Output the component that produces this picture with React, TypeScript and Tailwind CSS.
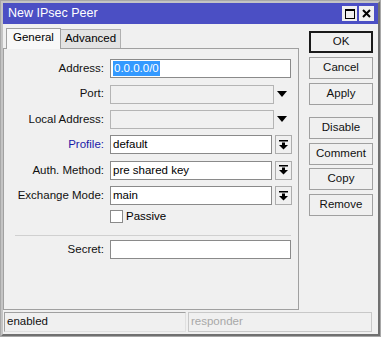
import React from "react";

const font = { fontFamily: '"Liberation Sans", Arial, sans-serif' };

function Arrow() {
  return (
    <div className="w-[16px] h-[20px] flex items-center justify-center">
      <svg width="10" height="6" viewBox="0 0 10 6">
        <polygon points="0,0 10,0 5,6" fill="#000" />
      </svg>
    </div>
  );
}

function MenuBtn() {
  return (
    <div className="w-[17px] h-[19px] border border-[#adadad] bg-[#f0f0f0] flex items-center justify-center">
      <svg width="9" height="10" viewBox="0 0 9 10">
        <rect x="0" y="0" width="9" height="1.5" fill="#000" />
        <rect x="3" y="2.5" width="3" height="3" fill="#000" />
        <polygon points="0,5 9,5 4.5,9.5" fill="#000" />
      </svg>
    </div>
  );
}

function Row({ label, blue, children }: { label: string; blue?: boolean; children: React.ReactNode }) {
  return (
    <div className="flex items-center h-[25.4px]">
      <div className={`w-[103px] text-right pr-[3px] ${blue ? "text-[#1a1aa8]" : "text-[#111]"}`}>{label}</div>
      <div className="flex items-center ml-[3px]">{children}</div>
    </div>
  );
}

function Btn({ label, def }: { label: string; def?: boolean }) {
  return (
    <div
      className={`w-[64px] h-[22px] flex items-center justify-center bg-[#f0f0f0] text-[#111] ${
        def ? "border-2 border-[#1a1a1a]" : "border border-[#a0a0a0]"
      }`}
    >
      {label}
    </div>
  );
}

export default function App() {
  return (
    <div
      style={font}
      className="w-[381px] h-[337px] bg-[#a8a8a8] p-[1px] text-[11.5px] leading-none select-none"
    >
      <div className="w-full h-full border-2 border-[#c4c4c4] border-r-[#707070] border-b-[#707070] bg-[#f0f0f0] flex flex-col">
        <div className="h-[21px] bg-[#4b4fc4] flex items-center pl-[5px] pr-[4px] shrink-0">
          <span className="text-white text-[12.5px]">New IPsec Peer</span>
          <div className="ml-auto flex gap-[2px]">
            <div className="w-[15px] h-[15px] bg-[#f0f0f0] flex items-center justify-center">
              <div className="w-[10px] h-[10px] border border-black border-t-2" />
            </div>
            <div className="w-[15px] h-[15px] bg-[#f0f0f0] flex items-center justify-center">
              <svg width="9" height="9" viewBox="0 0 9 9">
                <path d="M1 1 L8 8 M8 1 L1 8" stroke="#000" strokeWidth="2" />
              </svg>
            </div>
          </div>
        </div>
        <div className="flex flex-1 pt-[3px]">
          <div className="flex flex-col w-[296px]">
            <div className="flex items-end h-[21px] pl-[3px]">
              <div className="h-[21px] px-[6px] flex items-center bg-[#f8f8f8] border border-[#a0a0a0] border-b-0 relative z-10 mb-[-1px] pb-[2px]">
                General
              </div>
              <div className="h-[19px] px-[4px] flex items-center bg-[#e3e3e3] border border-[#b0b0b0] border-b-0 border-l-0">
                Advanced
              </div>
            </div>
            <div className="h-[262px] border border-[#a0a0a0] bg-[#f0f0f0] pt-[7px]">
              <Row label="Address:">
                <div className="w-[181px] h-[19px] bg-white border border-[#8a8a8a] flex items-center pl-[2px]">
                  <span className="bg-[#3399ff] text-white px-[1px] leading-[15px]">0.0.0.0/0</span>
                </div>
              </Row>
              <Row label="Port:">
                <div className="w-[164px] h-[19px] bg-[#f0f0f0] border border-[#b4b4b4]" />
                <Arrow />
              </Row>
              <Row label="Local Address:">
                <div className="w-[164px] h-[19px] bg-[#f0f0f0] border border-[#b4b4b4]" />
                <Arrow />
              </Row>
              <Row label="Profile:" blue>
                <div className="w-[162px] h-[19px] bg-white border border-[#8a8a8a] flex items-center pl-[2px]">default</div>
                <div className="ml-[3px]"><MenuBtn /></div>
              </Row>
              <Row label="Auth. Method:">
                <div className="w-[162px] h-[19px] bg-white border border-[#8a8a8a] flex items-center pl-[2px]">pre shared key</div>
                <div className="ml-[3px]"><MenuBtn /></div>
              </Row>
              <Row label="Exchange Mode:">
                <div className="w-[162px] h-[19px] bg-white border border-[#8a8a8a] flex items-center pl-[2px]">main</div>
                <div className="ml-[3px]"><MenuBtn /></div>
              </Row>
              <div className="flex items-center h-[19px] pl-[106px] mt-[-1px]">
                <div className="w-[13px] h-[13px] bg-white border border-[#8a8a8a]" />
                <span className="ml-[3px]">Passive</span>
              </div>
              <div className="ml-[11px] mr-[7px] mt-[9px] h-[1px] bg-[#d0d0d0]" />
              <div className="flex items-center h-[25px] mt-[1px]">
                <div className="w-[103px] text-right pr-[3px] text-[#111]">Secret:</div>
                <div className="ml-[3px] w-[181px] h-[19px] bg-white border border-[#8a8a8a]" />
              </div>
            </div>
          </div>
          <div className="flex flex-col pl-[10px] pt-[4px]">
            <Btn label="OK" def />
            <div className="mt-[4px]"><Btn label="Cancel" /></div>
            <div className="mt-[4px]"><Btn label="Apply" /></div>
            <div className="mt-[12px]"><Btn label="Disable" /></div>
            <div className="mt-[4px]"><Btn label="Comment" /></div>
            <div className="mt-[3px]"><Btn label="Copy" /></div>
            <div className="mt-[4px]"><Btn label="Remove" /></div>
          </div>
        </div>
        <div className="flex h-[20px] mb-[2px] mx-[1px] gap-[2px]">
          <div className="w-[182px] border border-[#a0a0a0] border-r-[#e0e0e0] border-b-[#e0e0e0] flex items-center pl-[2px] text-[#111]">enabled</div>
          <div className="w-[184px] border border-[#c8c8c8] flex items-center pl-[2px] text-[#a8a8a8]">responder</div>
        </div>
      </div>
    </div>
  );
}
